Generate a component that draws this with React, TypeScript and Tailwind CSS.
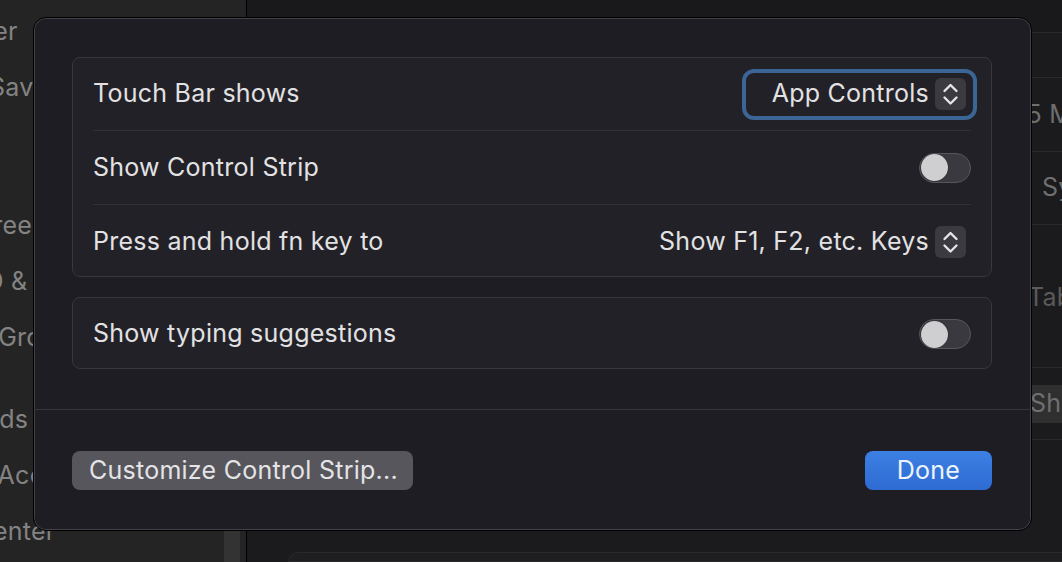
import React from 'react';

const font = { fontFamily: 'Inter, "Noto Sans", "Liberation Sans", sans-serif' };

const sidebarItems: { label: string; gap?: boolean }[] = [
  { label: 'Wallpaper' },
  { label: 'Screen Saver' },
  { label: 'Battery' },
  { label: 'Lock Screen', gap: true },
  { label: 'Touch ID & Password' },
  { label: 'Users & Groups' },
  { label: 'Passwords', gap: true },
  { label: 'Internet Accounts' },
  { label: 'Game Center' },
];

const Stepper = () => (
  <div className="flex h-[32px] w-[31px] items-center justify-center rounded-[6px] bg-[#3b3a40]">
    <svg width="31" height="32" viewBox="0 0 31 32" fill="none">
      <path d="M9.5 13 L15.5 7 L21.5 13" stroke="#e4e4e6" strokeWidth="2.4" strokeLinecap="round" strokeLinejoin="round" />
      <path d="M9.5 19.5 L15.5 25.5 L21.5 19.5" stroke="#e4e4e6" strokeWidth="2.4" strokeLinecap="round" strokeLinejoin="round" />
    </svg>
  </div>
);

const Toggle = () => (
  <div className="flex h-[30px] w-[52px] items-center rounded-full border border-[#57565c] bg-[#3a393f] px-px">
    <div className="h-[27px] w-[27px] rounded-full bg-[#cfcfd1] shadow-[0_0_1px_rgba(0,0,0,0.6)]" />
  </div>
);

const Row = ({ label, children, className }: { label: string; children: React.ReactNode; className: string }) => (
  <div className={`ml-[20px] mr-[20px] flex items-center justify-between ${className}`}>
    <span className="text-[25px] tracking-[0.25px] text-[#e2e2e4]">{label}</span>
    {children}
  </div>
);

export default function App() {
  return (
    <div className="relative flex h-[562px] w-[1062px] overflow-hidden bg-[#1b1b1d]" style={font}>
      {/* Sidebar behind the sheet */}
      <div className="relative flex w-[246px] shrink-0 flex-col overflow-hidden bg-[#242424] pt-[4px]">
        {sidebarItems.map((item) => (
          <div key={item.label} className={`flex h-[56px] items-center ${item.gap ? 'mt-[26px]' : ''}`}>
            <span className="ml-[-103px] whitespace-nowrap text-[25px] tracking-[0.25px] text-[#838383]">{item.label}</span>
          </div>
        ))}
        <div className="absolute left-[224px] top-[500px] h-[62px] w-[16px] bg-[#333333]" />
      </div>

      {/* Main pane behind the sheet */}
      <div className="flex flex-1 flex-col border-l border-black bg-[#1b1b1d]">
        <div className="h-[33px] shrink-0 border-b border-[#2a2a2c] bg-[#19191b]" />
        <div className="h-[45px] shrink-0 border-b border-[#2a2a2c]" />
        <div className="grid grid-cols-[769px_1fr] text-[25px] tracking-[0.25px] text-[#6f6f6f]">
          <div className="h-[74px] border-b border-[#2a2a2c]" />
          <div className="flex h-[74px] items-center whitespace-nowrap border-b border-[#2a2a2c]">15 Minutes</div>
          <div className="h-[73px] border-b border-[#2a2a2c]" />
          <div className="flex h-[73px] items-center whitespace-nowrap border-b border-[#2a2a2c] pl-[26px]">System</div>
          <div className="h-[143px] border-b border-[#2a2a2c]" />
          <div className="flex h-[143px] items-center whitespace-nowrap border-b border-[#2a2a2c] pl-[12px] pt-[4px] text-[#5a5a5a]">Tab</div>
          <div className="h-[72px] border-b border-[#2a2a2c]" />
          <div className="flex h-[72px] items-center border-b border-[#2a2a2c] pl-[12px]">
            <span className="flex h-[38px] items-center whitespace-nowrap bg-[#2f2f30] px-[2px]">Show</span>
          </div>
        </div>
        <div className="ml-[41px] mt-[112px] h-[40px] rounded-t-[12px] border border-[#2a2a2c] bg-[#1e1e20]" />
      </div>

      {/* Sheet */}
      <div className="absolute left-[33px] top-[17px] flex h-[514px] w-[999px] flex-col rounded-[13px] border border-black bg-[#1e1d24] shadow-[inset_0_0_0_1px_rgba(255,255,255,0.16)]">
        <div className="flex flex-col gap-[20px] pl-[38px] pr-[39px] pt-[39px]">
          <div className="rounded-[8px] border border-[#38373d] bg-[#222127]">
            <Row label="Touch Bar shows" className="h-[73px] border-b border-[#323137]">
              <div className="-mr-[6px] flex h-[51px] items-center gap-[6px] rounded-[12px] border-[4px] border-[#3a6594] pl-[26px] pr-[7px]">
                <span className="text-[25px] tracking-[0.25px] text-[#e2e2e4]">App Controls</span>
                <Stepper />
              </div>
            </Row>
            <Row label="Show Control Strip" className="h-[74px] border-b border-[#323137]">
              <Toggle />
            </Row>
            <Row label="Press and hold fn key to" className="h-[71px] pt-[2px]">
              <div className="-mr-[6px] flex h-[51px] items-center gap-[6px] border-[4px] border-transparent pr-[7px]">
                <span className="text-[25px] tracking-[0.25px] text-[#e2e2e4]">Show F1, F2, etc. Keys</span>
                <Stepper />
              </div>
            </Row>
          </div>
          <div className="rounded-[8px] border border-[#38373d] bg-[#222127]">
            <Row label="Show typing suggestions" className="h-[70px] pt-[2px]">
              <Toggle />
            </Row>
          </div>
        </div>

        <div className="mt-[40px] border-t border-[#37363c]" />

        <div className="flex items-center justify-between pl-[38px] pr-[39px] pt-[41px]">
          <button className="flex h-[39px] w-[341px] items-center rounded-[8px] bg-[#57565c] pl-[17px] text-[25px] tracking-[0.25px] text-[#e4e4e6]">
            Customize Control Strip...
          </button>
          <button className="flex h-[39px] w-[127px] items-center justify-center rounded-[8px] bg-gradient-to-b from-[#3c80e4] to-[#2e6bd2] text-[25px] tracking-[0.25px] text-[#eef3fb]">
            Done
          </button>
        </div>
      </div>
    </div>
  );
}
